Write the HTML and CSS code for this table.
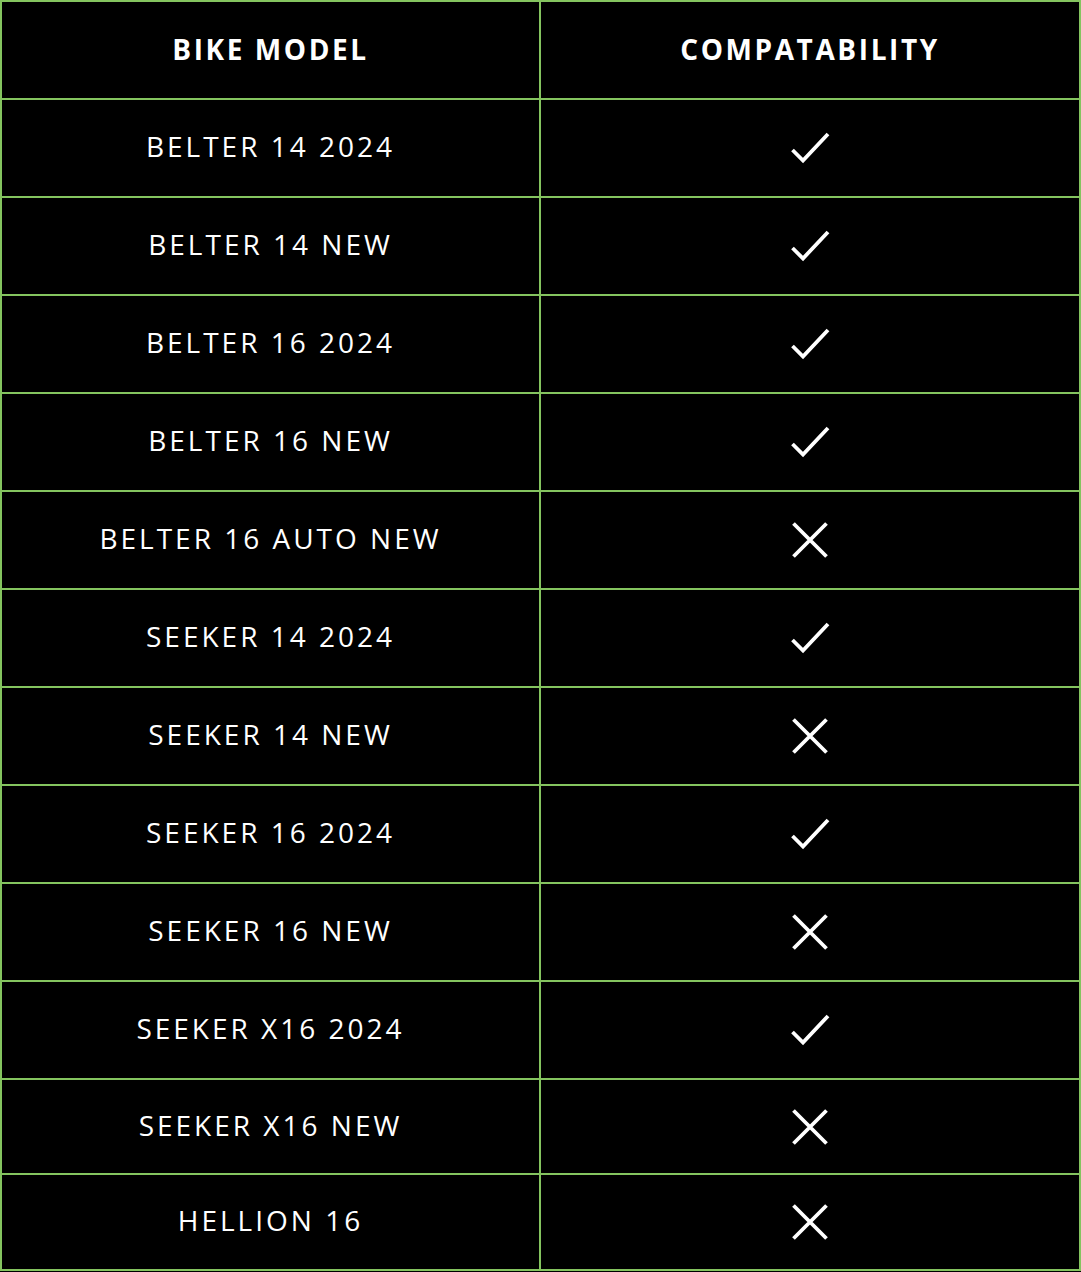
FILE: index.html
```html
<!DOCTYPE html>
<html lang="en">
<head>
<meta charset="utf-8">
<title>Bike compatibility</title>
<link rel="stylesheet" href="styles.css">
</head>
<body>
<table class="compat">
  <thead>
    <tr><th>BIKE MODEL</th><th>COMPATABILITY</th></tr>
  </thead>
  <tbody>
    <tr><td>BELTER 14 2024</td><td><svg class="ic" viewBox="0 0 40 40"><path d="M2.5 22 L13 32.5 L38 6"/></svg></td></tr>
    <tr><td>BELTER 14 NEW</td><td><svg class="ic" viewBox="0 0 40 40"><path d="M2.5 22 L13 32.5 L38 6"/></svg></td></tr>
    <tr><td>BELTER 16 2024</td><td><svg class="ic" viewBox="0 0 40 40"><path d="M2.5 22 L13 32.5 L38 6"/></svg></td></tr>
    <tr><td>BELTER 16 NEW</td><td><svg class="ic" viewBox="0 0 40 40"><path d="M2.5 22 L13 32.5 L38 6"/></svg></td></tr>
    <tr><td>BELTER 16 AUTO NEW</td><td><svg class="ic" viewBox="0 0 40 40"><path d="M3.5 3.5 L36.5 36.5 M36.5 3.5 L3.5 36.5"/></svg></td></tr>
    <tr><td>SEEKER 14 2024</td><td><svg class="ic" viewBox="0 0 40 40"><path d="M2.5 22 L13 32.5 L38 6"/></svg></td></tr>
    <tr><td>SEEKER 14 NEW</td><td><svg class="ic" viewBox="0 0 40 40"><path d="M3.5 3.5 L36.5 36.5 M36.5 3.5 L3.5 36.5"/></svg></td></tr>
    <tr><td>SEEKER 16 2024</td><td><svg class="ic" viewBox="0 0 40 40"><path d="M2.5 22 L13 32.5 L38 6"/></svg></td></tr>
    <tr><td>SEEKER 16 NEW</td><td><svg class="ic" viewBox="0 0 40 40"><path d="M3.5 3.5 L36.5 36.5 M36.5 3.5 L3.5 36.5"/></svg></td></tr>
    <tr><td>SEEKER X16 2024</td><td><svg class="ic" viewBox="0 0 40 40"><path d="M2.5 22 L13 32.5 L38 6"/></svg></td></tr>
    <tr class="short1"><td>SEEKER X16 NEW</td><td><svg class="ic" viewBox="0 0 40 40"><path d="M3.5 3.5 L36.5 36.5 M36.5 3.5 L3.5 36.5"/></svg></td></tr>
    <tr class="short2"><td>HELLION 16</td><td><svg class="ic" viewBox="0 0 40 40"><path d="M3.5 3.5 L36.5 36.5 M36.5 3.5 L3.5 36.5"/></svg></td></tr>
  </tbody>
</table>
</body>
</html>
```
FILE: styles.css
```css
html, body {
  margin: 0;
  padding: 0;
  background: #000;
}
.compat {
  width: 1081px;
  border-collapse: collapse;
  table-layout: fixed;
  background: #000;
  color: #fff;
  font-family: "Open Sans", "DejaVu Sans", sans-serif;
}
.compat th, .compat td {
  border: 2px solid #84c45f;
  text-align: center;
  vertical-align: middle;
  padding: 0;
  height: 96px;
  box-sizing: content-box;
}
.compat td:first-child {
  padding-bottom: 4px;
  height: 92px;
}
.compat th {
  padding-bottom: 2px;
  height: 94px;
}
.compat th:first-child, .compat td:first-child {
  width: 537px;
}
.compat th {
  font-size: 28px;
  font-weight: 700;
  letter-spacing: 2.6px;
}
.compat td {
  font-size: 28px;
  font-weight: 400;
  letter-spacing: 3px;
}
.compat tr.short1 td { height: 93px; }
.compat tr.short1 td:first-child { height: 89px; }
.compat tr.short2 td { height: 94px; }
.compat tr.short2 td:first-child { height: 90px; }
.ic {
  display: block;
  margin: 0 auto;
  width: 40px;
  height: 40px;
  fill: none;
  stroke: #fff;
  stroke-width: 3.8;
  stroke-linecap: butt;
  stroke-linejoin: miter;
}
```
